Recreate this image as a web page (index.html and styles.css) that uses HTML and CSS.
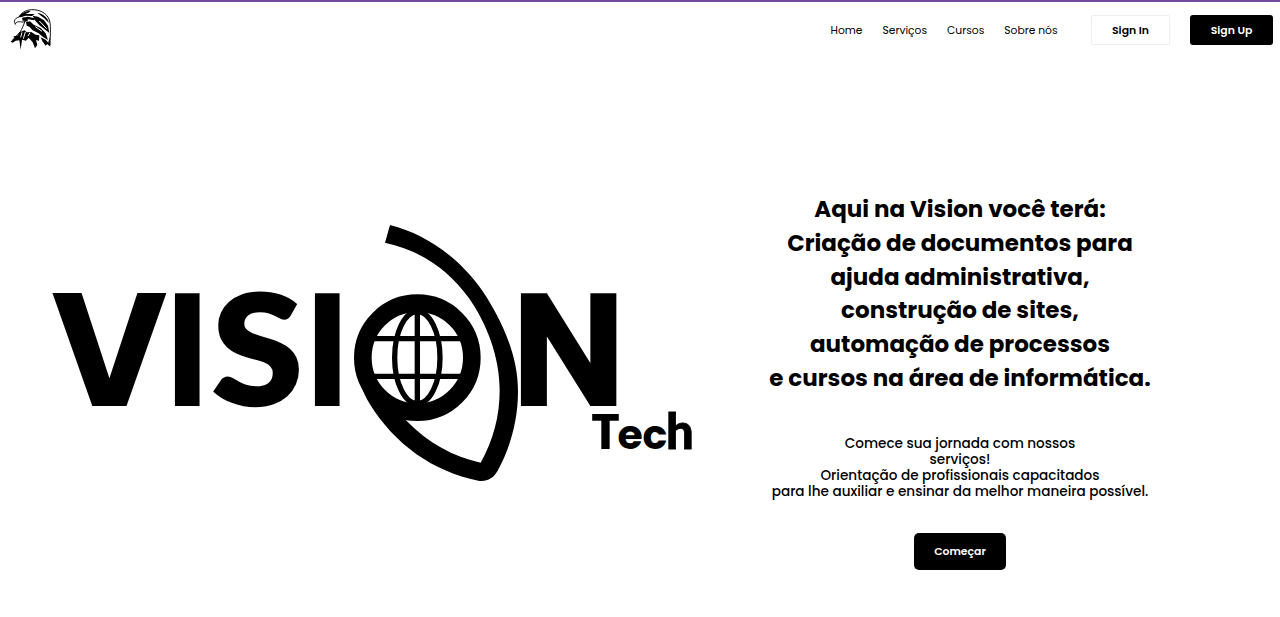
FILE: index.html
```html
<!DOCTYPE html>
<html lang="pt-BR">
<head>
<meta charset="utf-8">
<title>Vision Tech</title>
<link rel="stylesheet" href="styles.css">
</head>
<body>
<header class="topbar">
  <a class="brand" href="#" aria-label="Vision Tech">
    <svg class="eagle" viewBox="27 24 132 132">
      <path class="eagle-line" d="M43 64C45 56 51 52 58 51C62 40 76 30 94 29C118 28 141 39 148 60C153 75 151 94 150 135M43 64L46 73C48 64 56 65 65 66C73 67 76 62 84 62M75 63C71 76 66 86 61 95L38 120"/>
      <path d="M56 50C64 38 78 33 92 32L88 37L76 42L104 42L96 48L77 47L62 52ZM66 53L84 50L104 55L103 61L84 58L80 63L68 62ZM78 66L90 64L101 74L122 84L137 100L144 120L128 110L116 100L98 91L88 80L80 77ZM98 47L114 50L132 61L144 77L148 99L134 88L118 76L106 62ZM112 38C129 40 144 53 147 69L133 55L121 46ZM60 96L74 91L80 97L94 96L107 104L118 106L117 122L108 120L112 135L105 145L98 127L86 113L78 122L66 119L62 149L58 121L47 122L38 128L32 125L44 114L40 109L52 107ZM122 112L137 119L145 128L149 110L151 140L142 132L137 137L128 125Z"/>
      <path class="eagle-cut" d="M66 97L62 112M76 96L70 116M90 98L84 108M106 80L126 94M118 63L140 86"/>
    </svg>
  </a>
  <nav class="menu">
    <a href="#">Home</a>
    <a href="#">Serviços</a>
    <a href="#">Cursos</a>
    <a href="#">Sobre nós</a>
  </nav>
  <a class="btn btn-light" href="#">Sign In</a>
  <a class="btn btn-dark" href="#">Sign Up</a>
</header>
<main class="hero">
  <svg class="logo" viewBox="0 210 700 290" aria-label="Vision Tech">
    <g class="word">
      <text transform="translate(51 406)">V</text>
      <text transform="translate(166 406) scale(.9 1)">I</text>
      <text class="word-s" transform="translate(211.8 405) scale(1.09 1)">S</text>
      <text transform="translate(306 406) scale(.9 1)">I</text>
      <text transform="translate(511.4 406) scale(.95 1)">N</text>
    </g>
    <text class="tech" y="449"><tspan class="tech-cap" x="591">T</tspan><tspan x="617.5 642.5">ec</tspan><tspan class="tech-tall" x="666">h</tspan></text>
    <g transform="translate(340 210) scale(.33333)">
      <path d="M150 45C260 72 370 150 440 262C500 360 534 450 534 545C534 640 505 725 473 782C460 805 440 816 415 812C280 785 165 705 88 580C70 550 50 500 45 460L197 630C265 700 340 740 422 758C460 690 479 620 479 540C479 440 440 340 385 262C325 180 240 120 135 98Z"/>
      <circle class="globe-fill" cx="232" cy="443" r="163"/>
      <circle class="ring" cx="232" cy="443" r="163.5"/>
      <path class="grid" d="M232 300V586M95 386H369M95 499H369"/>
      <ellipse class="grid" cx="232" cy="443" rx="68" ry="138"/>
    </g>
  </svg>
  <section class="pitch">
    <h1>Aqui na Vision você terá:<br>Criação de documentos para<br>ajuda administrativa,<br>construção de sites,<br>automação de processos<br>e cursos na área de informática.</h1>
    <p>Comece sua jornada com nossos<br>serviços!<br>Orientação de profissionais capacitados<br>para lhe auxiliar e ensinar da melhor maneira possível.</p>
    <a class="btn btn-start" href="#">Começar</a>
  </section>
</main>
</body>
</html>
```
FILE: styles.css
```css
* { box-sizing: border-box; }
body { margin: 0; height: 617px; overflow: hidden; background: #fff; color: #000; font-family: Poppins, Inter, sans-serif; }
a { color: inherit; text-decoration: none; }
.topbar { display: flex; align-items: center; height: 60px; border-top: 2px solid #744aa1; padding: 0 7px 2px 9px; }
.brand { display: flex; margin-right: auto; }
.eagle { width: 44px; height: 44px; }
.eagle-line { fill: none; stroke: #111; stroke-width: 3; }
.eagle-cut { fill: none; stroke: #fff; stroke-width: 3; }
.menu { display: flex; gap: 20px; margin-right: 33.5px; padding-top: 1px; font-size: 10.72px; }
.btn { display: inline-flex; align-items: center; justify-content: center; font-weight: 600; font-size: 10.88px; }
.btn-light { width: 79px; height: 30px; padding-top: 1px; border: 1px solid #eee; border-radius: 2px; margin-right: 20px; }
.btn-dark { width: 83px; height: 30px; padding-top: 1px; background: #000; color: #fff; border-radius: 3px; }
.hero { display: grid; grid-template-columns: 700px 520px; height: 557px; }
.logo { width: 700px; height: 290px; margin-top: 150px; }
.word text { font: 700 160px Poppins, Inter, sans-serif; }
.word .word-s { font: 900 152px Lato, sans-serif; stroke: #000; stroke-width: 2.5px; }
.tech { font: 700 41px Poppins, Inter, sans-serif; }
.tech-cap { font-size: 49px; }
.tech-tall { font: 900 49px Lato, sans-serif; stroke: #000; stroke-width: .8px; }
.globe-fill { fill: #fff; }
.ring { fill: none; stroke: #000; stroke-width: 53; }
.grid { fill: none; stroke: #000; stroke-width: 16; }
.pitch { display: flex; flex-direction: column; align-items: center; padding-top: 133px; text-align: center; white-space: nowrap; }
h1 { margin: 0; font-size: 23px; line-height: 33.8px; font-weight: 700; }
p { margin: 39.8px 0 32.8px; font-size: 13.6px; line-height: 16.2px; font-weight: 500; }
.btn-start { width: 92px; height: 37px; background: #000; color: #fff; border-radius: 5px; }
```
